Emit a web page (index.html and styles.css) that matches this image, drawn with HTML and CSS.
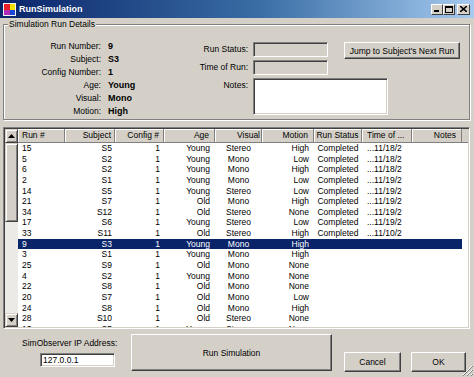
FILE: index.html
```html
<!DOCTYPE html>
<html lang="en">
<head>
    <meta charset="UTF-8">
    <title>RunSimulation</title>
    <link rel="stylesheet" href="styles.css">
</head>
<body>
    <div class="window">
        <div class="titlebar">
            <svg class="app-icon" viewBox="0 0 13 13">
                <rect x="0" y="0" width="13" height="13" fill="#f4f4f4"/>
                <rect x="1" y="1" width="6" height="6" fill="#e8202a"/>
                <rect x="7" y="1" width="5" height="6" fill="#f6e200"/>
                <rect x="1" y="7" width="6" height="5" fill="#b02ab8"/>
                <rect x="7" y="7" width="5" height="5" fill="#1e46d8"/>
            </svg>
            <span class="title">RunSimulation</span>
            <div class="caption-buttons">
                <span class="cap-btn">
                    <svg width="6" height="6" viewBox="0 0 6 6"><rect x="0" y="4" width="5" height="2" fill="#000"/></svg>
                </span>
                <span class="cap-btn">
                    <svg width="8" height="7" viewBox="0 0 8 7"><rect x="0.5" y="0.5" width="7" height="6" fill="none" stroke="#000"/><rect x="0" y="0" width="8" height="2" fill="#000"/></svg>
                </span>
                <span class="cap-btn close">
                    <svg width="7" height="6" viewBox="0 0 7 6"><path d="M0 0 L7 6 M7 0 L0 6" stroke="#000" stroke-width="1.6"/></svg>
                </span>
            </div>
        </div>

        <div class="client">
            <div class="groupbox">
                <span class="legend">Simulation Run Details</span>
                <div class="details">
                    <div class="info">
                        <span class="lbl">Run Number:</span><span class="val">9</span>
                        <span class="lbl">Subject:</span><span class="val">S3</span>
                        <span class="lbl">Config Number:</span><span class="val">1</span>
                        <span class="lbl">Age:</span><span class="val">Young</span>
                        <span class="lbl">Visual:</span><span class="val">Mono</span>
                        <span class="lbl">Motion:</span><span class="val">High</span>
                    </div>
                    <div class="status">
                        <span class="lbl">Run Status:</span>
                        <input class="field" type="text" disabled>
                        <button class="btn jump">Jump to Subject's Next Run</button>
                        <span class="lbl">Time of Run:</span>
                        <input class="field" type="text" disabled>
                        <span class="lbl">Notes:</span>
                        <textarea class="notes"></textarea>
                    </div>
                </div>
            </div>

            <div class="grid">
                <div class="vscroll">
                    <span class="sb-btn">
                        <svg width="7" height="4" viewBox="0 0 7 4"><path d="M3.5 0 L7 4 L0 4 Z" fill="#000"/></svg>
                    </span>
                    <span class="sb-thumb"></span>
                    <span class="sb-track"></span>
                    <span class="sb-btn">
                        <svg width="7" height="4" viewBox="0 0 7 4"><path d="M0 0 L7 0 L3.5 4 Z" fill="#000"/></svg>
                    </span>
                </div>
                <div class="table">
                    <div class="row head">
                        <span class="c-run">Run #</span>
                        <span class="c-subj">Subject</span>
                        <span class="c-cfg">Config #</span>
                        <span class="c-age">Age</span>
                        <span class="c-vis head-vis">Visual</span>
                        <span class="c-mot">Motion</span>
                        <span class="c-stat">Run Status</span>
                        <span class="c-time">Time of ...</span>
                        <span class="c-notes">Notes</span>
                    </div>
                    <div id="rows"></div>
                </div>
            </div>

            <div class="footer">
                <div class="ip">
                    <span class="ip-label">SimObserver IP Address:</span>
                    <input class="ip-field" type="text" value="127.0.0.1">
                </div>
                <button class="btn run">Run Simulation</button>
                <button class="btn small cancel">Cancel</button>
                <button class="btn small ok">OK</button>
            </div>
        </div>

        <svg class="grip" width="11" height="11" viewBox="0 0 11 11">
            <path d="M10 1 L1 10 M10 5 L5 10 M10 9 L9 10" stroke="#fff" stroke-width="1"/>
            <path d="M11 1 L1 11 M11 5 L5 11 M11 9 L9 11" stroke="#808080" stroke-width="1"/>
        </svg>
    </div>

    <script>
        const runs = [
            ['15', 'S5', '1', 'Young', 'Stereo', 'High', 'Completed', '...11/18/2'],
            ['5', 'S2', '1', 'Young', 'Mono', 'Low', 'Completed', '...11/18/2'],
            ['6', 'S2', '1', 'Young', 'Mono', 'High', 'Completed', '...11/18/2'],
            ['2', 'S1', '1', 'Young', 'Mono', 'Low', 'Completed', '...11/19/2'],
            ['14', 'S5', '1', 'Young', 'Stereo', 'Low', 'Completed', '...11/19/2'],
            ['21', 'S7', '1', 'Old', 'Mono', 'High', 'Completed', '...11/19/2'],
            ['34', 'S12', '1', 'Old', 'Stereo', 'None', 'Completed', '...11/19/2'],
            ['17', 'S6', '1', 'Young', 'Stereo', 'Low', 'Completed', '...11/19/2'],
            ['33', 'S11', '1', 'Old', 'Stereo', 'High', 'Completed', '...11/10/2'],
            ['9', 'S3', '1', 'Young', 'Mono', 'High', '', ''],
            ['3', 'S1', '1', 'Young', 'Mono', 'High', '', ''],
            ['25', 'S9', '1', 'Old', 'Mono', 'None', '', ''],
            ['4', 'S2', '1', 'Young', 'Mono', 'None', '', ''],
            ['22', 'S8', '1', 'Old', 'Mono', 'None', '', ''],
            ['20', 'S7', '1', 'Old', 'Mono', 'Low', '', ''],
            ['24', 'S8', '1', 'Old', 'Mono', 'High', '', ''],
            ['28', 'S10', '1', 'Old', 'Stereo', 'None', '', ''],
            ['13', 'S5', '1', 'Young', 'Stereo', 'None', '', '']
        ];
        const cols = ['c-run', 'c-subj', 'c-cfg', 'c-age', 'c-vis', 'c-mot', 'c-stat', 'c-time', 'c-notes'];
        const selectedRun = '9';
        const rowsBox = document.getElementById('rows');

        runs.forEach(run => {
            const row = document.createElement('div');
            row.className = 'row' + (run[0] === selectedRun ? ' selected' : '');
            cols.forEach((cls, i) => {
                const cell = document.createElement('span');
                cell.className = cls;
                cell.textContent = run[i] || '';
                row.appendChild(cell);
            });
            rowsBox.appendChild(row);
        });
    </script>
</body>
</html>
```

FILE: styles.css
```css
body {
    margin: 0;
    padding: 0;
    font-family: "Liberation Sans", Arial, sans-serif;
    font-size: 8.5px;
    color: #000;
    background-color: #d4d0c8;
}

.window {
    position: relative;
    width: 474px;
    height: 377px;
    display: flex;
    flex-direction: column;
    background-color: #d4d0c8;
    overflow: hidden;
}

/* title bar */
.titlebar {
    height: 18px;
    flex-shrink: 0;
    display: flex;
    align-items: center;
    padding-left: 3px;
    background: linear-gradient(to right, #0a246a 0%, #3a6ea5 55%, #a6caf0 100%);
    color: #fff;
}

.app-icon {
    width: 13px;
    height: 13px;
    margin-right: 3px;
}

.title {
    font-weight: bold;
    font-size: 9px;
}

.caption-buttons {
    margin-left: auto;
    margin-right: 4px;
    display: flex;
}

.cap-btn {
    width: 10px;
    height: 9px;
    display: flex;
    align-items: center;
    justify-content: center;
    background-color: #d4d0c8;
    border: 1px solid;
    border-color: #fff #404040 #404040 #fff;
}

.cap-btn.close {
    margin-left: 2px;
    width: 11px;
}

/* client area */
.client {
    flex-grow: 1;
    padding: 0 4px 0 3px;
}

.groupbox {
    position: relative;
    margin-top: 6px;
    height: 94px;
    border: 1px solid #808080;
    box-shadow: inset 1px 1px 0 #fff, 1px 1px 0 #fff;
}

.legend {
    position: absolute;
    top: -6px;
    left: 4px;
    padding: 0 1px;
    background-color: #d4d0c8;
    line-height: 11px;
}

.details {
    display: flex;
    padding: 14px 0 0 6px;
}

.info {
    display: grid;
    grid-template-columns: 91px 72px;
    grid-auto-rows: 13px;
    column-gap: 7px;
    align-items: center;
}

.info .lbl {
    text-align: right;
}

.info .val {
    font-weight: bold;
    font-size: 9px;
}

.status {
    display: grid;
    grid-template-columns: 73px 75px 132px;
    grid-template-rows: 15px 15px 37px;
    row-gap: 3px;
    margin-top: 3px;
}

.status .lbl {
    grid-column: 1;
    text-align: right;
    padding: 2px 5px 0 0;
}

.field,
.notes,
.ip-field {
    box-sizing: border-box;
    margin: 0;
    border: 1px solid;
    border-color: #808080 #fff #fff #808080;
    box-shadow: inset 1px 1px 0 #404040, inset -1px -1px 0 #d4d0c8;
    font-family: inherit;
    font-size: 8.5px;
    outline: none;
}

.field {
    grid-column: 2;
    width: 75px;
    height: 15px;
    background-color: #d4d0c8;
}

.notes {
    grid-column: 2 / span 2;
    width: 135px;
    height: 37px;
    resize: none;
    background-color: #fff;
}

.btn {
    box-sizing: border-box;
    margin: 0;
    padding: 0;
    background-color: #d4d0c8;
    border: 1px solid;
    border-color: #fff #404040 #404040 #fff;
    box-shadow: inset -1px -1px 0 #808080;
    font-family: inherit;
    font-size: 8.5px;
    color: #000;
}

.jump {
    grid-column: 3;
    grid-row: 1;
    width: 116px;
    height: 17px;
    margin-left: 16px;
}

/* data grid */
.grid {
    margin-top: 7px;
    height: 202px;
    box-sizing: border-box;
    display: flex;
    border: 1px solid;
    border-color: #808080 #fff #fff #808080;
    box-shadow: inset 1px 1px 0 #404040, inset -1px -1px 0 #d4d0c8;
    padding: 1px;
    background-color: #fff;
}

.vscroll {
    width: 13px;
    flex-shrink: 0;
    display: flex;
    flex-direction: column;
}

.sb-btn,
.sb-thumb {
    box-sizing: border-box;
    background-color: #d4d0c8;
    border: 1px solid;
    border-color: #d4d0c8 #404040 #404040 #d4d0c8;
    box-shadow: inset 1px 1px 0 #fff, inset -1px -1px 0 #808080;
}

.sb-btn {
    height: 14px;
    display: flex;
    align-items: center;
    justify-content: center;
}

.sb-thumb {
    height: 79px;
}

.sb-track {
    flex-grow: 1;
    background-color: #eceae6;
}

.table {
    flex-grow: 1;
    overflow: hidden;
}

.row {
    display: grid;
    grid-template-columns: 47px 50px 49px 51px 47px 52px 48px 50px 50px;
    width: 444px;
    height: 10.65px;
    line-height: 10.65px;
    white-space: nowrap;
}

.row span {
    overflow: hidden;
}

.row.head {
    width: auto;
    height: 14px;
    line-height: 13px;
    background-color: #d4d0c8;
    border-bottom: 1px solid #808080;
    box-sizing: border-box;
}

.row.head span {
    border-right: 1px solid #808080;
    box-shadow: inset 1px 1px 0 #fff;
}

.row.selected {
    background-color: #0a246a;
    color: #fff;
}

.c-run { padding-left: 4px; }
.c-subj { text-align: right; padding-right: 3px; }
.c-cfg { text-align: right; padding-right: 4px; }
.c-age { text-align: right; padding-right: 5px; }
.c-vis { text-align: center; }
.c-mot { text-align: right; padding-right: 5px; }
.c-stat { text-align: center; }
.c-time { padding-left: 5px; }
.c-notes { text-align: right; padding-right: 5px; }

.row.head .head-vis {
    text-align: right;
    padding-right: 1px;
}

/* bottom controls */
.footer {
    display: flex;
    padding-top: 5px;
}

.ip {
    width: 128px;
    display: flex;
    flex-direction: column;
    align-items: flex-start;
}

.ip-label {
    margin: 4px 0 0 19px;
}

.ip-field {
    margin: 5px 0 0 37px;
    width: 75px;
    height: 14px;
    padding: 0 2px;
    background-color: #fff;
}

.run {
    width: 201px;
    height: 37px;
}

.small {
    margin-top: 18px;
    height: 20px;
}

.cancel {
    width: 57px;
    margin-left: 12px;
}

.ok {
    width: 55px;
    margin-left: 10px;
}

.grip {
    position: absolute;
    right: 1px;
    bottom: 1px;
}
```
